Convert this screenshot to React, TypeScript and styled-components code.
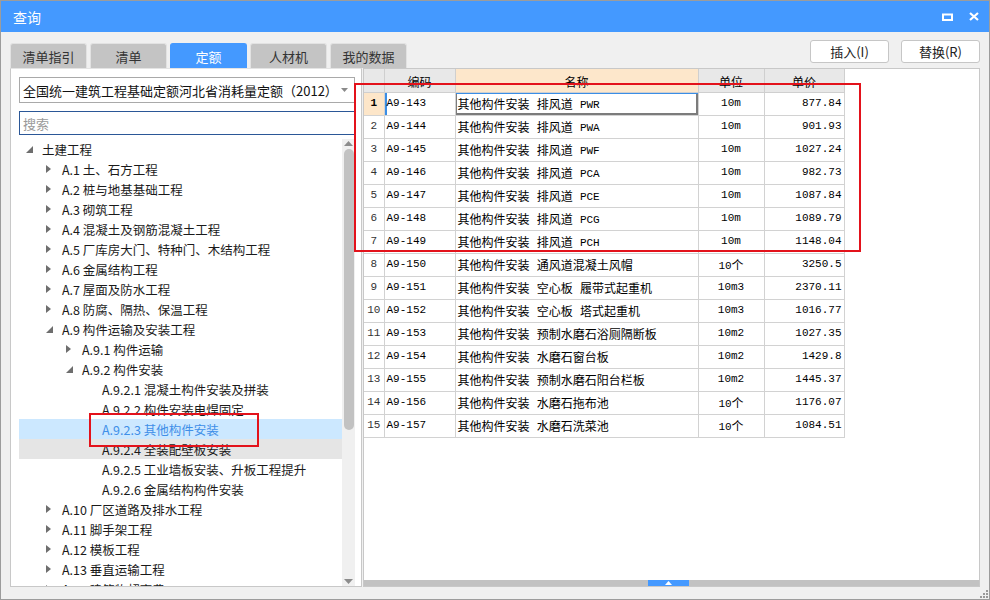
import React from 'react';
import styled, { createGlobalStyle } from 'styled-components';

const GlobalStyle = createGlobalStyle`
  html, body {
    margin: 0;
    padding: 0;
    background: #ffffff;
  }
  * {
    box-sizing: border-box;
  }
`;

const UI_FONT = `"Microsoft YaHei", "Noto Sans CJK SC", "Noto Sans", sans-serif`;
const GRID_FONT = `"Liberation Mono", "Noto Sans CJK SC", monospace`;

const Window = styled.div`
  position: relative;
  width: 990px;
  height: 600px;
  border: 1px solid #9c9c9c;
  background: #f0f0f0;
  display: flex;
  flex-direction: column;
  font-family: ${UI_FONT};
  overflow: hidden;
`;

const TitleBar = styled.div`
  height: 31px;
  background: #4499ff;
  display: flex;
  align-items: center;
  padding: 0 10px 0 12px;
  color: #ffffff;
  font-size: 14px;
`;

const TitleText = styled.div`
  flex: 1;
`;

const TitleButtons = styled.div`
  display: flex;
  align-items: center;
  gap: 16px;
`;

const Body = styled.div`
  flex: 1;
  display: flex;
  flex-direction: column;
  padding: 8px 9px 0 9px;
  min-height: 0;
`;

const TopRow = styled.div`
  height: 28px;
  display: flex;
  align-items: flex-end;
`;

const Tabs = styled.div`
  flex: 1;
  display: flex;
  gap: 3px;
`;

const Tab = styled.div<{ $active?: boolean }>`
  width: 77px;
  height: 25px;
  display: flex;
  align-items: center;
  justify-content: center;
  font-size: 13px;
  color: ${p => (p.$active ? '#ffffff' : '#333333')};
  background: ${p => (p.$active ? '#4499ff' : '#c4c4c4')};
  border: 1px solid ${p => (p.$active ? '#4499ff' : '#e2e2e2')};
  border-bottom: none;
  border-radius: 3px 3px 0 0;
`;

const Buttons = styled.div`
  display: flex;
  gap: 12px;
  align-self: flex-start;
`;

const Button = styled.div`
  width: 79px;
  height: 23px;
  display: flex;
  align-items: center;
  justify-content: center;
  background: #ffffff;
  border: 1px solid #c6c6c6;
  border-radius: 3px;
  font-size: 13px;
  color: #222222;
`;

const Content = styled.div`
  height: 519px;
  display: flex;
  gap: 1px;
`;

const LeftPanel = styled.div`
  width: 352px;
  background: #ffffff;
  border: 1px solid #c8c8c8;
  border-top-color: #e4e4e4;
  padding: 8px 6px 0 8px;
  display: flex;
  flex-direction: column;
  gap: 8px;
`;

const Select = styled.div`
  height: 26px;
  border: 1px solid #a9a9a9;
  display: flex;
  align-items: center;
  padding: 0 6px 0 3px;
  font-size: 13px;
  color: #111111;
`;

const SelectText = styled.div`
  flex: 1;
  white-space: nowrap;
`;

const Search = styled.div`
  height: 24px;
  border: 1px solid #2b5797;
  display: flex;
  align-items: center;
  padding: 0 3px;
  font-size: 13px;
  color: #9a9a9a;
  margin-bottom: -4px;
`;

const Tree = styled.div`
  flex: 1;
  display: flex;
  min-height: 0;
`;

const TreeList = styled.div`
  flex: 1;
  overflow: hidden;
`;

const TreeRow = styled.div<{ $level: number; $selected?: boolean; $hover?: boolean }>`
  height: 20px;
  display: flex;
  align-items: center;
  padding-left: ${p => 5 + p.$level * 20}px;
  font-size: 12.5px;
  white-space: nowrap;
  color: ${p => (p.$selected ? '#3f8fe8' : '#1a1a1a')};
  background: ${p => (p.$selected ? '#cce8ff' : p.$hover ? '#e5e5e5' : 'transparent')};
`;

const Arrow = styled.div`
  width: 18px;
  height: 20px;
  display: flex;
  align-items: center;
  padding-left: 2px;
`;

const VScroll = styled.div`
  width: 13px;
  background: #f0f0f0;
  display: flex;
  flex-direction: column;
  align-items: center;
  padding: 2px 0;
`;

const VThumb = styled.div`
  width: 10px;
  height: 281px;
  margin-top: 3px;
  border-radius: 5px;
  background: #c2c2c2;
`;

const VSpacer = styled.div`
  flex: 1;
`;

const RightPanel = styled.div`
  flex: 1;
  background: #ffffff;
  border: 1px solid #c8c8c8;
  display: flex;
  flex-direction: column;
`;

const GridArea = styled.div`
  flex: 1;
`;

const Grid = styled.table`
  border-collapse: collapse;
  table-layout: fixed;
  font-family: ${GRID_FONT};
  font-size: 12px;
  color: #000000;
`;

const HeadCell = styled.th<{ $accent?: boolean }>`
  height: 23px;
  padding: 3px 0 0 0;
  font-weight: normal;
  text-align: center;
  background: ${p => (p.$accent ? '#fde7cb' : '#e8e8e8')};
  border: 1px solid #cfcfcf;
  border-top: none;
`;

const Cell = styled.td<{ $align?: string }>`
  height: 23px;
  padding: ${p => (p.$align === 'right' ? '0 2px 0 0' : '0 2px')};
  text-align: ${p => p.$align || 'left'};
  border: 1px solid #d2d2d2;
  white-space: nowrap;
  overflow: hidden;
`;

const NumCell = styled(Cell)<{ $current?: boolean }>`
  text-align: center;
  padding: 0;
  color: ${p => (p.$current ? '#000000' : '#333333')};
  font-weight: ${p => (p.$current ? 'bold' : 'normal')};
  background: ${p => (p.$current ? '#fde6c9' : '#ffffff')};
  border-left: none;
`;

const CodeCell = styled(Cell)<{ $current?: boolean }>`
  box-shadow: ${p => (p.$current ? 'inset 2px 0 0 #3a8ee6' : 'none')};
`;

const NameCell = styled(Cell)<{ $current?: boolean }>`
  box-shadow: ${p => (p.$current ? 'inset 0 1px 0 #3a8ee6, inset -2px -2px 0 #7c7c7c, inset 1px 0 0 #7c7c7c' : 'none')};
`;

const Latin = styled.span`
  font-size: 11px;
  vertical-align: 1px;
`;

const HScroll = styled.div`
  height: 6px;
  background: #c2c2c2;
  display: flex;
  justify-content: center;
`;

const HThumb = styled.div`
  width: 41px;
  margin-left: -6px;
  background: #4499ff;
  display: flex;
  align-items: center;
  justify-content: center;
`;

const Footer = styled.div`
  flex: 1;
  display: flex;
  justify-content: flex-end;
  align-items: flex-end;
  padding: 0 0 1px 0;
  margin-right: -8px;
`;

const Mark = styled.div`
  position: absolute;
  border: 2px solid #e3121b;
  pointer-events: none;
`;

type Node = { label: string; level: number; state?: 'open' | 'closed'; selected?: boolean; hover?: boolean };

const tree: Node[] = [
  { label: '土建工程', level: 0, state: 'open' },
  { label: 'A.1 土、石方工程', level: 1, state: 'closed' },
  { label: 'A.2 桩与地基基础工程', level: 1, state: 'closed' },
  { label: 'A.3 砌筑工程', level: 1, state: 'closed' },
  { label: 'A.4 混凝土及钢筋混凝土工程', level: 1, state: 'closed' },
  { label: 'A.5 厂库房大门、特种门、木结构工程', level: 1, state: 'closed' },
  { label: 'A.6 金属结构工程', level: 1, state: 'closed' },
  { label: 'A.7 屋面及防水工程', level: 1, state: 'closed' },
  { label: 'A.8 防腐、隔热、保温工程', level: 1, state: 'closed' },
  { label: 'A.9 构件运输及安装工程', level: 1, state: 'open' },
  { label: 'A.9.1 构件运输', level: 2, state: 'closed' },
  { label: 'A.9.2 构件安装', level: 2, state: 'open' },
  { label: 'A.9.2.1 混凝土构件安装及拼装', level: 3 },
  { label: 'A.9.2.2 构件安装电焊固定', level: 3 },
  { label: 'A.9.2.3 其他构件安装', level: 3, selected: true },
  { label: 'A.9.2.4 全装配壁板安装', level: 3, hover: true },
  { label: 'A.9.2.5 工业墙板安装、升板工程提升', level: 3 },
  { label: 'A.9.2.6 金属结构构件安装', level: 3 },
  { label: 'A.10 厂区道路及排水工程', level: 1, state: 'closed' },
  { label: 'A.11 脚手架工程', level: 1, state: 'closed' },
  { label: 'A.12 模板工程', level: 1, state: 'closed' },
  { label: 'A.13 垂直运输工程', level: 1, state: 'closed' },
  { label: 'A.14 建筑物超高费', level: 1, state: 'closed' },
];

const rows = [
  ['A9-143', '其他构件安装 排风道 PWR', '10m', '877.84'],
  ['A9-144', '其他构件安装 排风道 PWA', '10m', '901.93'],
  ['A9-145', '其他构件安装 排风道 PWF', '10m', '1027.24'],
  ['A9-146', '其他构件安装 排风道 PCA', '10m', '982.73'],
  ['A9-147', '其他构件安装 排风道 PCE', '10m', '1087.84'],
  ['A9-148', '其他构件安装 排风道 PCG', '10m', '1089.79'],
  ['A9-149', '其他构件安装 排风道 PCH', '10m', '1148.04'],
  ['A9-150', '其他构件安装 通风道混凝土风帽', '10个', '3250.5'],
  ['A9-151', '其他构件安装 空心板 履带式起重机', '10m3', '2370.11'],
  ['A9-152', '其他构件安装 空心板 塔式起重机', '10m3', '1016.77'],
  ['A9-153', '其他构件安装 预制水磨石浴厕隔断板', '10m2', '1027.35'],
  ['A9-154', '其他构件安装 水磨石窗台板', '10m2', '1429.8'],
  ['A9-155', '其他构件安装 预制水磨石阳台栏板', '10m2', '1445.37'],
  ['A9-156', '其他构件安装 水磨石拖布池', '10个', '1176.07'],
  ['A9-157', '其他构件安装 水磨石洗菜池', '10个', '1084.51'],
];

// ascii runs get the narrow grid size, CJK stays at 12px
const mixed = (text: string) =>
  text.split(/([A-Za-z0-9.\-]+)/).map((part, i) =>
    /^[A-Za-z0-9.\-]+$/.test(part) ? <Latin key={i}>{part}</Latin> : <React.Fragment key={i}>{part}</React.Fragment>
  );

const TreeArrow = ({ state }: { state?: 'open' | 'closed' }) => (
  <Arrow>
    {state === 'closed' && (
      <svg width="5" height="8" viewBox="0 0 5 8">
        <path d="M0 0 L5 4 L0 8 Z" fill="#6e6e6e" />
      </svg>
    )}
    {state === 'open' && (
      <svg width="7" height="7" viewBox="0 0 7 7">
        <path d="M7 0 L7 7 L0 7 Z" fill="#6e6e6e" />
      </svg>
    )}
  </Arrow>
);

export default function App() {
  return (
    <>
      <GlobalStyle />
      <Window>
        <TitleBar>
          <TitleText>查询</TitleText>
          <TitleButtons>
            <svg width="11" height="8" viewBox="0 0 11 8">
              <rect x="1" y="1.5" width="9" height="5.5" fill="none" stroke="#ffffff" strokeWidth="2" />
            </svg>
            <svg width="10" height="9" viewBox="0 0 10 9">
              <path d="M1 1 L9 8 M9 1 L1 8" stroke="#ffffff" strokeWidth="2.2" />
            </svg>
          </TitleButtons>
        </TitleBar>
        <Body>
          <TopRow>
            <Tabs>
              <Tab>清单指引</Tab>
              <Tab>清单</Tab>
              <Tab $active>定额</Tab>
              <Tab>人材机</Tab>
              <Tab>我的数据</Tab>
            </Tabs>
            <Buttons>
              <Button>插入(I)</Button>
              <Button>替换(R)</Button>
            </Buttons>
          </TopRow>
          <Content>
            <LeftPanel>
              <Select>
                <SelectText>全国统一建筑工程基础定额河北省消耗量定额（2012）</SelectText>
                <svg width="7" height="4" viewBox="0 0 7 4">
                  <path d="M0 0 L7 0 L3.5 4 Z" fill="#8a8a8a" />
                </svg>
              </Select>
              <Search>搜索</Search>
              <Tree>
                <TreeList>
                  {tree.map(n => (
                    <TreeRow key={n.label} $level={n.level} $selected={n.selected} $hover={n.hover}>
                      <TreeArrow state={n.state} />
                      {n.label}
                    </TreeRow>
                  ))}
                </TreeList>
                <VScroll>
                  <svg width="9" height="5" viewBox="0 0 9 5">
                    <path d="M0 5 L4.5 0 L9 5 Z" fill="#8c8c8c" />
                  </svg>
                  <VThumb />
                  <VSpacer />
                  <svg width="9" height="5" viewBox="0 0 9 5">
                    <path d="M0 0 L4.5 5 L9 0 Z" fill="#8c8c8c" />
                  </svg>
                </VScroll>
              </Tree>
            </LeftPanel>
            <RightPanel>
              <GridArea>
                <Grid>
                  <colgroup>
                    <col style={{ width: 20 }} />
                    <col style={{ width: 71 }} />
                    <col style={{ width: 243 }} />
                    <col style={{ width: 66 }} />
                    <col style={{ width: 80 }} />
                  </colgroup>
                  <thead>
                    <tr>
                      <HeadCell style={{ borderLeft: 'none' }} />
                      <HeadCell>编码</HeadCell>
                      <HeadCell $accent>名称</HeadCell>
                      <HeadCell>单位</HeadCell>
                      <HeadCell>单价</HeadCell>
                    </tr>
                  </thead>
                  <tbody>
                    {rows.map((r, i) => (
                      <tr key={r[0]}>
                        <NumCell $current={i === 0}>
                          <Latin>{i + 1}</Latin>
                        </NumCell>
                        <CodeCell $current={i === 0}>
                          <Latin>{r[0]}</Latin>
                        </CodeCell>
                        <NameCell $current={i === 0}>{mixed(r[1])}</NameCell>
                        <Cell $align="center">{mixed(r[2])}</Cell>
                        <Cell $align="right">
                          <Latin>{r[3]}</Latin>
                        </Cell>
                      </tr>
                    ))}
                  </tbody>
                </Grid>
              </GridArea>
              <HScroll>
                <HThumb>
                  <svg width="7" height="4" viewBox="0 0 7 4">
                    <path d="M0 4 L3.5 0 L7 4 Z" fill="#ffffff" />
                  </svg>
                </HThumb>
              </HScroll>
            </RightPanel>
          </Content>
          <Footer>
            <svg width="8" height="8" viewBox="0 0 8 8">
              <g fill="#9a9a9a">
                <rect x="6" y="0" width="2" height="2" />
                <rect x="3" y="3" width="2" height="2" />
                <rect x="6" y="3" width="2" height="2" />
                <rect x="0" y="6" width="2" height="2" />
                <rect x="3" y="6" width="2" height="2" />
                <rect x="6" y="6" width="2" height="2" />
              </g>
            </svg>
          </Footer>
        </Body>
        <Mark style={{ left: 353, top: 82, width: 507, height: 169 }} />
        <Mark style={{ left: 88, top: 412, width: 170, height: 34 }} />
      </Window>
    </>
  );
}
